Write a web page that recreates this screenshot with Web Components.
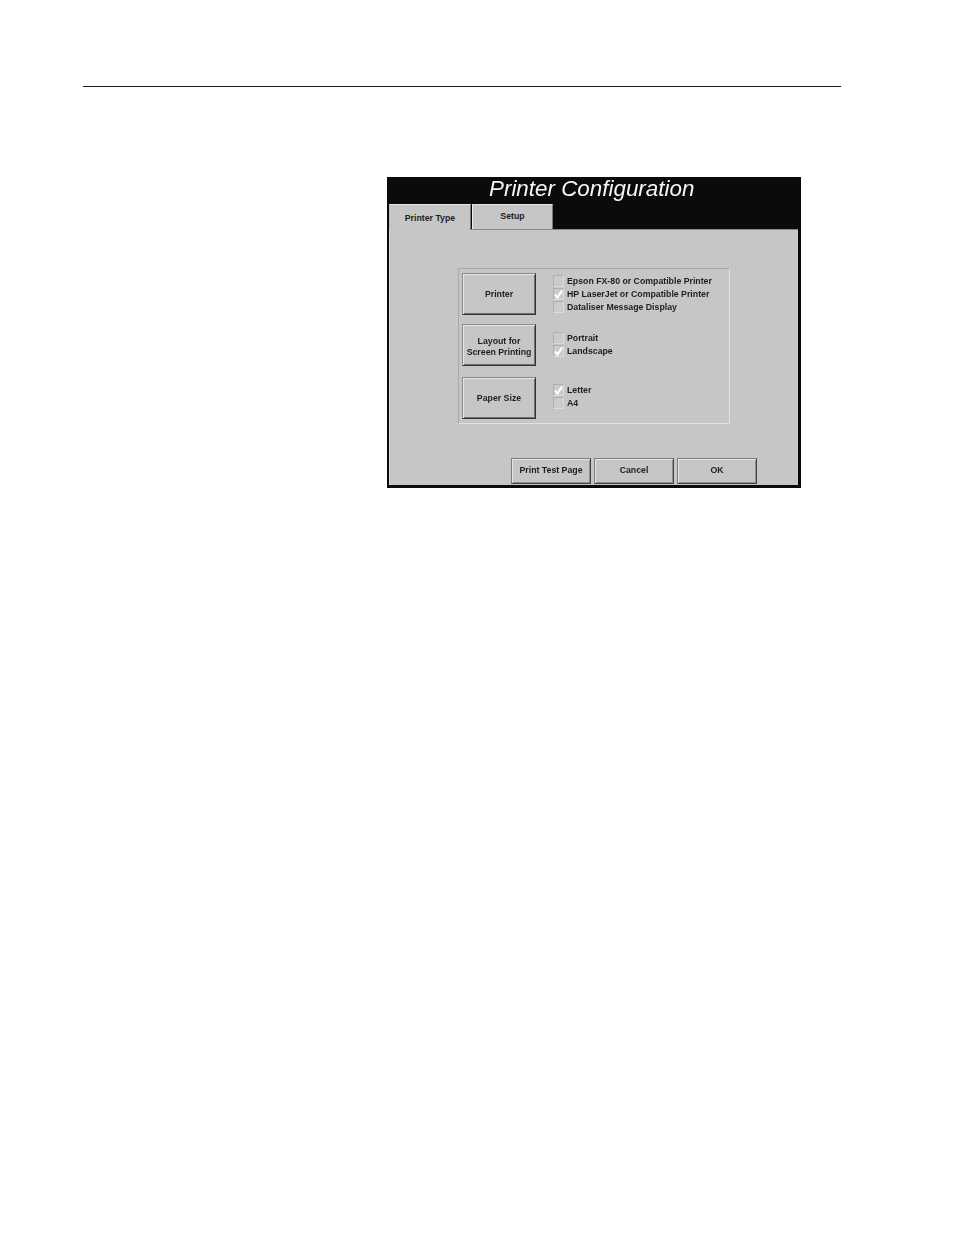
<!DOCTYPE html>
<html>
<head>
<meta charset="utf-8">
<title>Printer Configuration</title>
<style>
  html, body { margin: 0; background: #fff; }
  body { font-family: "Liberation Sans", Arial, sans-serif; }
</style>
</head>
<body>
<manual-page>
  <printer-window heading="Printer Configuration">
    <window-tab slot="tabs" active>Printer Type</window-tab>
    <window-tab slot="tabs">Setup</window-tab>

    <option-group>
      <option-row>
        <bevel-button slot="button" tall>Printer</bevel-button>
        <check-item>Epson FX-80 or Compatible Printer</check-item>
        <check-item checked>HP LaserJet or Compatible Printer</check-item>
        <check-item>Dataliser Message Display</check-item>
      </option-row>
      <option-row shift="1">
        <bevel-button slot="button" tall low>Layout for<br>Screen Printing</bevel-button>
        <check-item>Portrait</check-item>
        <check-item checked>Landscape</check-item>
      </option-row>
      <option-row shift="2" style="margin-top: 2px">
        <bevel-button slot="button" tall>Paper Size</bevel-button>
        <check-item checked>Letter</check-item>
        <check-item>A4</check-item>
      </option-row>
    </option-group>

    <bevel-button slot="actions">Print Test Page</bevel-button>
    <bevel-button slot="actions">Cancel</bevel-button>
    <bevel-button slot="actions">OK</bevel-button>
  </printer-window>
</manual-page>

<script>
  class ManualPage extends HTMLElement {
    constructor() {
      super();
      this.attachShadow( {mode: 'open'} ).innerHTML = /* template */ `
        <style>
          :host {
            box-sizing: border-box;
            display: block;
            height: 1235px;
            padding: 86px 113px 0 83px;
            background: #fff;
          }
          .rule {
            border-top: 1px solid #1c1c1c;
            margin-bottom: 90px;
          }
          .figure {
            margin-left: 304px;
          }
        </style>
        <div class="rule"></div>
        <div class="figure"><slot></slot></div>
      `;
    }
  }

  class PrinterWindow extends HTMLElement {
    constructor() {
      super();
      this.attachShadow( {mode: 'open'} ).innerHTML = /* template */ `
        <style>
          :host {
            box-sizing: border-box;
            display: flex;
            flex-direction: column;
            width: 414px;
            height: 311px;
            padding: 0 3px 3px 2px;
            background: #0b0b0b;
            filter: blur( 0.7px );
          }
          h1 {
            box-sizing: border-box;
            height: 27px;
            margin: 0;
            padding: 0 0 0 100px;
            color: #f6f6f6;
            font: italic 400 22.4px/24px "Liberation Sans", Arial, sans-serif;
            white-space: nowrap;
          }
          .tabs {
            display: flex;
            gap: 1px;
            height: 25px;
            position: relative;
          }
          .panel {
            box-sizing: border-box;
            flex: 1;
            display: flex;
            flex-direction: column;
            padding: 38px 0 0 68px;
            background: #c6c6c6;
            border-top: 1px solid #8a8a8a;
            border-left: 1px solid #d8d8d8;
          }
          .actions {
            display: flex;
            gap: 3px;
            margin: 34px 0 0 53px;
          }
        </style>
        <h1></h1>
        <div class="tabs"><slot name="tabs"></slot></div>
        <div class="panel">
          <slot></slot>
          <div class="actions"><slot name="actions"></slot></div>
        </div>
      `;
    }

    connectedCallback() {
      this.shadowRoot.querySelector( 'h1' ).textContent = this.getAttribute( 'heading' );
    }
  }

  class WindowTab extends HTMLElement {
    constructor() {
      super();
      this.attachShadow( {mode: 'open'} ).innerHTML = /* template */ `
        <style>
          :host {
            box-sizing: border-box;
            display: flex;
            align-items: center;
            justify-content: center;
            width: 81px;
            height: 25px;
            padding-bottom: 2px;
            background: #c6c6c6;
            border-top: 1px solid #e4e4e4;
            border-left: 1px solid #ececec;
            border-right: 1px solid #777;
            color: #1e1e1e;
            font: 700 8.75px/10px "Liberation Sans", Arial, sans-serif;
          }
          :host( [active] ) {
            width: 82px;
            height: 26px;
            margin-bottom: -1px;
            padding-bottom: 0;
            border-left-color: #bdbdbd;
            z-index: 1;
          }
        </style>
        <slot></slot>
      `;
    }
  }

  class OptionGroup extends HTMLElement {
    constructor() {
      super();
      this.attachShadow( {mode: 'open'} ).innerHTML = /* template */ `
        <style>
          :host {
            box-sizing: border-box;
            display: flex;
            flex-direction: column;
            gap: 9px;
            width: 272px;
            height: 156px;
            padding: 4px 0 0 3px;
            border: 1px solid;
            border-color: #a9a9a9 #e2e2e2 #e2e2e2 #a9a9a9;
          }
        </style>
        <slot></slot>
      `;
    }
  }

  class OptionRow extends HTMLElement {
    constructor() {
      super();
      this.attachShadow( {mode: 'open'} ).innerHTML = /* template */ `
        <style>
          :host {
            display: flex;
            align-items: center;
            gap: 17px;
          }
          .items {
            display: flex;
            flex-direction: column;
            gap: 1px;
          }
        </style>
        <slot name="button"></slot>
        <div class="items"><slot></slot></div>
      `;
    }

    connectedCallback() {
      const shift = parseInt( this.getAttribute( 'shift' ) || '0' );
      this.shadowRoot.querySelector( '.items' ).style.marginBottom = `${shift * 2}px`;
    }
  }

  class BevelButton extends HTMLElement {
    constructor() {
      super();
      this.attachShadow( {mode: 'open'} ).innerHTML = /* template */ `
        <style>
          :host {
            box-sizing: border-box;
            display: flex;
            align-items: center;
            justify-content: center;
            width: 80px;
            height: 26px;
            padding-bottom: 1px;
            background: #c6c6c6;
            border: 1px solid;
            border-color: #7d7d7d #444 #444 #7d7d7d;
            box-shadow: inset 1px 1px 0 #e6e6e6, inset -1px -1px 0 #8e8e8e;
            color: #1e1e1e;
            font: 700 8.75px/11px "Liberation Sans", Arial, sans-serif;
            text-align: center;
            white-space: nowrap;
          }
          :host( [tall] ) {
            width: 74px;
            height: 42px;
            padding-bottom: 0;
            border-color: #8a8a8a #333 #333 #8a8a8a;
            box-shadow: inset 1px 1px 0 #e6e6e6, inset -1px -1px 0 #707070;
          }
          :host( [low] ) {
            padding-top: 4px;
          }
        </style>
        <span><slot></slot></span>
      `;
    }
  }

  class CheckItem extends HTMLElement {
    constructor() {
      super();
      this.attachShadow( {mode: 'open'} ).innerHTML = /* template */ `
        <style>
          :host {
            display: flex;
            align-items: center;
            gap: 3px;
            height: 12px;
            color: #1e1e1e;
            font: 700 8.75px/12px "Liberation Sans", Arial, sans-serif;
            white-space: nowrap;
          }
          .box {
            box-sizing: border-box;
            flex: none;
            width: 11px;
            height: 12px;
            background: #cbcbcb;
            border: 1px solid;
            border-color: #b0b0b0 #dcdcdc #dcdcdc #b0b0b0;
          }
          svg {
            display: none;
            width: 9px;
            height: 10px;
          }
          :host( [checked] ) svg {
            display: block;
          }
        </style>
        <div class="box">
          <svg viewBox="0 0 9 10"><path d="M1 5.5 L3.5 8.5 L8 1.5" fill="none" stroke="#fff" stroke-width="2.2"/></svg>
        </div>
        <span><slot></slot></span>
      `;
    }
  }

  window.customElements.define( 'manual-page', ManualPage );
  window.customElements.define( 'printer-window', PrinterWindow );
  window.customElements.define( 'window-tab', WindowTab );
  window.customElements.define( 'option-group', OptionGroup );
  window.customElements.define( 'option-row', OptionRow );
  window.customElements.define( 'bevel-button', BevelButton );
  window.customElements.define( 'check-item', CheckItem );
</script>
</body>
</html>
